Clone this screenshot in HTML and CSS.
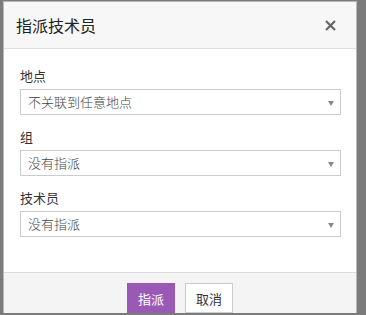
FILE: index.html
```html
<!DOCTYPE html>
<html lang="zh">
<head>
  <meta charset="UTF-8">
  <title>指派技术员</title>
  <link rel="stylesheet" href="styles.css">
</head>
<body>
  <div class="modal">
    <div class="modal-header">
      <h3>指派技术员</h3>
      <button class="close-btn" aria-label="关闭">
        <svg width="11" height="11" viewBox="0 0 11 11"><path d="M1 1L10 10M10 1L1 10" stroke="#666" stroke-width="2.2"/></svg>
      </button>
    </div>
    <div class="modal-body">
      <div class="form-group">
        <label>地点</label>
        <div class="select">不关联到任意地点<span class="caret"></span></div>
      </div>
      <div class="form-group">
        <label>组</label>
        <div class="select">没有指派<span class="caret"></span></div>
      </div>
      <div class="form-group">
        <label>技术员</label>
        <div class="select">没有指派<span class="caret"></span></div>
      </div>
    </div>
    <div class="modal-footer">
      <button class="btn btn-primary">指派</button>
      <button class="btn btn-default">取消</button>
    </div>
  </div>
</body>
</html>
```

FILE: styles.css
```css
body {
  margin: 0;
  height: 315px;
  overflow: hidden;
  background: #7b7b7b;
  font-family: "Noto Sans CJK SC", "Noto Sans", sans-serif;
}
.modal {
  margin: 1px 0 0 3px;
  width: 352px;
  background: #fff;
  border: 1px solid #b9b9b9;
  border-bottom: none;
}
.modal-header {
  background: #f7f7f7;
  height: 46px;
  border-bottom: 1px solid #dedede;
  display: flex;
  align-items: center;
  justify-content: space-between;
  padding: 0 20px 0 12px;
}
.modal-header h3 {
  margin: 0;
  font-size: 16px;
  font-weight: normal;
  color: #222;
}
.close-btn {
  border: none;
  background: none;
  padding: 0;
  display: flex;
  cursor: pointer;
}
.modal-body {
  padding: 18px 15px 35px 16px;
}
.form-group {
  margin-bottom: 13px;
}
.form-group:last-child {
  margin-bottom: 0;
}
.form-group label {
  display: block;
  font-size: 13px;
  line-height: 18px;
  color: #333;
  margin-bottom: 4px;
}
.select {
  height: 24px;
  border: 1px solid #ccc;
  font-size: 13px;
  font-weight: 300;
  line-height: 24px;
  color: #444;
  padding: 0 7px;
  position: relative;
}
.caret {
  position: absolute;
  right: 6px;
  top: 11px;
  width: 0;
  height: 0;
  border-left: 3.5px solid transparent;
  border-right: 3.5px solid transparent;
  border-top: 5px solid #888;
}
.modal-footer {
  background: #f4f4f4;
  border-top: 1px solid #dcdcdc;
  padding: 10px 0 0;
  display: flex;
  justify-content: center;
  gap: 10px;
}
.btn {
  width: 48px;
  height: 30px;
  font-family: inherit;
  font-size: 13px;
  padding: 0;
  cursor: pointer;
}
.btn-primary {
  background: #9b59b6;
  color: #fff;
  border: none;
}
.btn-default {
  background: #fff;
  color: #333;
  border: 1px solid #ccc;
}
```
